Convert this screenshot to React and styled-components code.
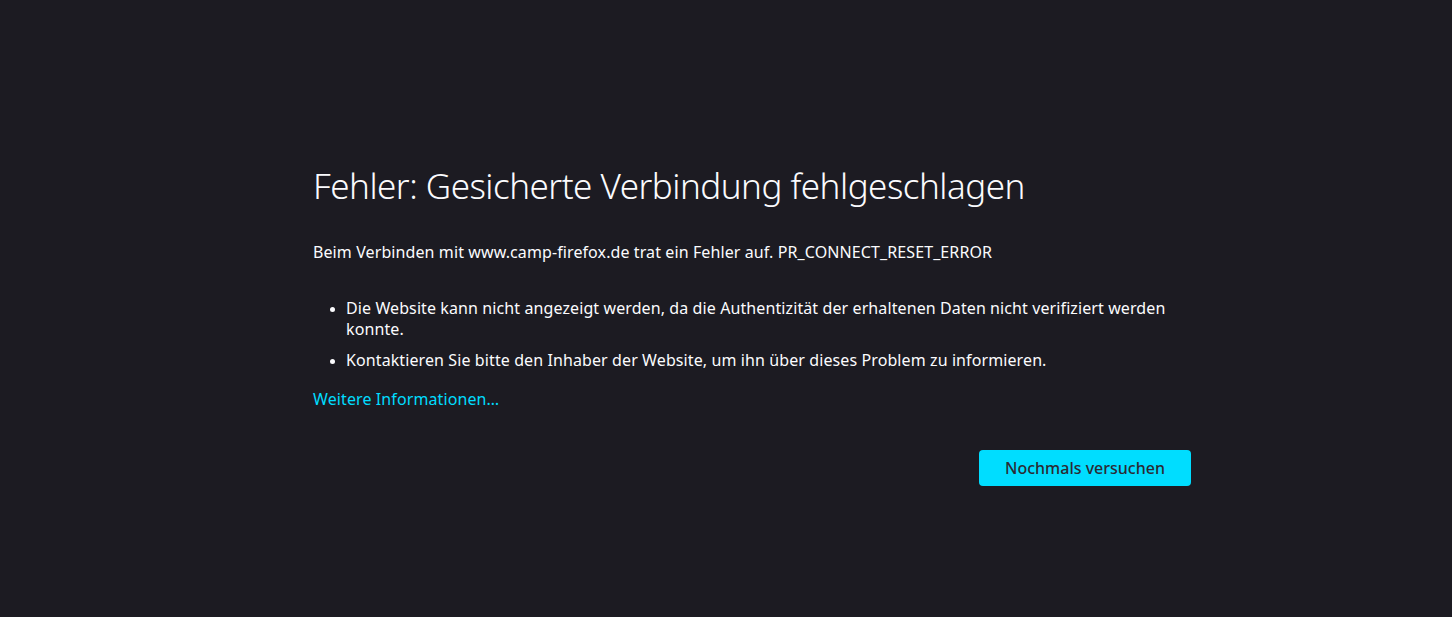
import React from 'react';
import styled, { createGlobalStyle } from 'styled-components';

const GlobalStyle = createGlobalStyle`
  html, body {
    margin: 0;
    padding: 0;
    background: #1c1b22;
  }
  body {
    font-family: "Noto Sans", "Open Sans", sans-serif;
    color: #fbfbfe;
  }
`;

const Page = styled.div`
  min-height: 617px;
  box-sizing: border-box;
  padding: 160px 0 0 313px;
`;

const Container = styled.div`
  width: 878px;
  display: flex;
  flex-direction: column;
`;

const Title = styled.h1`
  margin: 0;
  font-size: 35px;
  font-weight: 300;
  line-height: 52px;
  letter-spacing: -0.5px;
`;

const Text = styled.p`
  margin: 30px 0 0;
  font-size: 16px;
  line-height: 21px;
  letter-spacing: 0.1px;
`;

const List = styled.ul`
  margin: 35px 0 0;
  padding: 0 0 0 33px;
  font-size: 16px;
  line-height: 21px;
  letter-spacing: 0.1px;
`;

const Item = styled.li`
  margin-bottom: ${p => (p.last ? '0' : '10px')};
  &::marker {
    font-size: 13px;
  }
`;

const MoreLink = styled.a`
  margin-top: 18px;
  font-size: 16px;
  line-height: 21px;
  letter-spacing: 0.1px;
  color: #00ddff;
  text-decoration: none;
  align-self: flex-start;
  cursor: pointer;
`;

const Actions = styled.div`
  display: flex;
  justify-content: flex-end;
  margin-top: 40px;
`;

const Button = styled.button`
  width: 212px;
  height: 36px;
  border: none;
  border-radius: 4px;
  background: #00ddff;
  color: #2b2a33;
  font-family: inherit;
  font-size: 16px;
  font-weight: 500;
  cursor: pointer;
`;

export default function App() {
  return (
    <>
      <GlobalStyle />
      <Page>
        <Container>
          <Title>Fehler: Gesicherte Verbindung fehlgeschlagen</Title>
          <Text>
            Beim Verbinden mit www.camp-firefox.de trat ein Fehler auf. PR_CONNECT_RESET_ERROR
          </Text>
          <List>
            <Item>
              Die Website kann nicht angezeigt werden, da die Authentizität der erhaltenen Daten nicht verifiziert werden konnte.
            </Item>
            <Item last>
              Kontaktieren Sie bitte den Inhaber der Website, um ihn über dieses Problem zu informieren.
            </Item>
          </List>
          <MoreLink>Weitere Informationen…</MoreLink>
          <Actions>
            <Button>Nochmals versuchen</Button>
          </Actions>
        </Container>
      </Page>
    </>
  );
}
